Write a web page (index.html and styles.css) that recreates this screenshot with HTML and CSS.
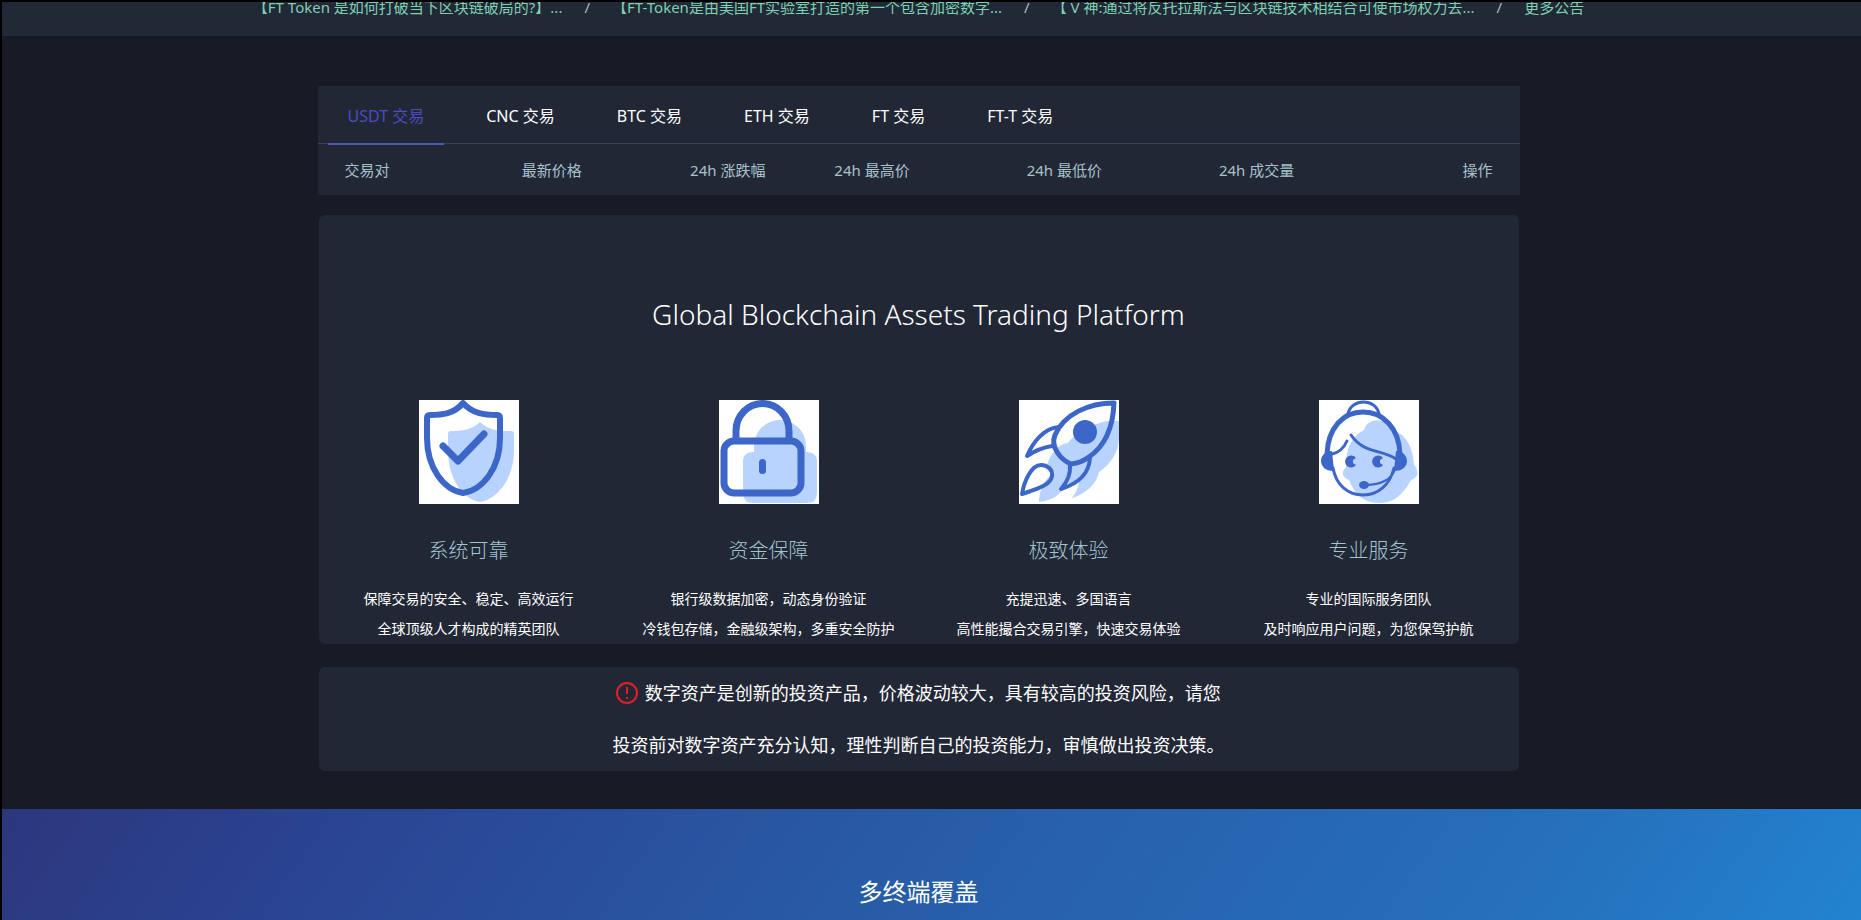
FILE: index.html
```html
<!DOCTYPE html>
<html lang="zh-CN">
<head>
    <meta charset="UTF-8">
    <meta name="viewport" content="width=device-width, initial-scale=1.0">
    <title>FT 交易平台</title>
    <link rel="stylesheet" href="styles.css">
</head>
<body>

    <div class="notice">
        <a href="#">【FT Token 是如何打破当下区块链破局的?】...</a>
        <span>/</span>
        <a href="#">【FT-Token是由美国FT实验室打造的第一个包含加密数字...</a>
        <span>/</span>
        <a href="#">【 V 神:通过将反托拉斯法与区块链技术相结合可使市场权力去...</a>
        <span>/</span>
        <a href="#">更多公告</a>
    </div>

    <main>
        <section class="card market">
            <div class="tabs">
                <button type="button" class="tab active">USDT 交易</button>
                <button type="button" class="tab">CNC 交易</button>
                <button type="button" class="tab">BTC 交易</button>
                <button type="button" class="tab">ETH 交易</button>
                <button type="button" class="tab">FT 交易</button>
                <button type="button" class="tab">FT-T 交易</button>
            </div>
            <table class="pairs">
                <thead>
                    <tr>
                        <th class="c-pair">交易对</th>
                        <th class="c-price">最新价格</th>
                        <th class="c-change">24h 涨跌幅</th>
                        <th class="c-day">24h 最高价</th>
                        <th class="c-day">24h 最低价</th>
                        <th class="c-day">24h 成交量</th>
                        <th class="c-action">操作</th>
                    </tr>
                </thead>
            </table>
        </section>

        <section class="card features">
            <h1>Global Blockchain Assets Trading Platform</h1>
            <div class="feature-list">
                <div class="feature">
                    <svg class="icon" viewBox="0 0 100 104">
                        <path class="shade" d="M61 22C69 30 80 31 92 31Q95 31 95 34V50C95 78 79 99 61 102C43 99 29 78 29 50V34Q29 31 32 31C43 31 53 30 61 22Z"/>
                        <path class="line" stroke-width="6" d="M44 3C54 14 66 15 78 15Q81 15 81 18V38C81 68 64 90 44 93C25 90 8 68 8 38V18Q8 15 11 15C23 15 35 14 44 3Z"/>
                        <path class="line" stroke-width="7" d="M24 46L39 61L65 34"/>
                    </svg>
                    <h2>系统可靠</h2>
                    <p>保障交易的安全、稳定、高效运行<br>全球顶级人才构成的精英团队</p>
                </div>
                <div class="feature">
                    <svg class="icon" viewBox="0 0 100 104">
                        <path class="shade" d="M35 52V46A26 26 0 0 1 87 46V52H88Q98 52 98 62V93Q98 103 88 103H34Q24 103 24 93V62Q24 52 34 52Z"/>
                        <path class="line" stroke-width="7" d="M17 40V31A26 27 0 0 1 70 31V40"/>
                        <rect class="line" stroke-width="7" x="5" y="41" width="77" height="52" rx="10"/>
                        <rect class="solid" x="40" y="59" width="7" height="15" rx="3.5"/>
                    </svg>
                    <h2>资金保障</h2>
                    <p>银行级数据加密，动态身份验证<br>冷钱包存储，金融级架构，多重安全防护</p>
                </div>
                <div class="feature">
                    <svg class="icon" viewBox="0 0 100 104">
                        <path class="shade" d="M100 21H88C66 26 54 36 49 43C38 44 31 55 28 65L36 73C26 76 20 92 20 102C32 101 44 94 46 84L60 82Q59 90 53 98C67 94 78 83 80 72C91 65 100 52 100 38Z"/>
                        <path class="line" stroke-width="5" d="M95 3C70 3 45 14 36 35C31 47 42 60 52 64Q62 63 70 57C86 46 94 28 95 3Z"/>
                        <path class="line" stroke-width="4" d="M40 27C25 28 14 42 8 56Q20 48 33 46"/>
                        <path class="line" stroke-width="4" d="M71 58C70 74 58 84 42 89Q52 78 51 65"/>
                        <path class="line" stroke-width="4" d="M3 94C5 82 12 65 22 65C29 65 34 70 33 76C32 86 14 90 3 94Z"/>
                        <circle class="solid" cx="66" cy="32" r="12"/>
                    </svg>
                    <h2>极致体验</h2>
                    <p>充提迅速、多国语言<br>高性能撮合交易引擎，快速交易体验</p>
                </div>
                <div class="feature">
                    <svg class="icon" viewBox="0 0 100 104">
                        <path class="shade" d="M45 30C48 17 70 17 75 30C88 36 94 48 95 65C100 70 100 78 92 80C84 95 74 103 61 103C46 103 36 96 30 80C23 78 22 72 27 67C27 48 32 37 45 30Z"/>
                        <path class="line" stroke-width="3" d="M29 14C32 -2 57 -2 60 14"/>
                        <path class="line" stroke-width="5" d="M8 54C9 28 24 12 44 12S80 28 81 54"/>
                        <path class="line" stroke-width="3" d="M14 68C17 85 29 95 44 95S71 85 75 68"/>
                        <path class="line" stroke-width="3" d="M32 35C45 54 62 49 77 59M28 41Q23 52 13 54"/>
                        <path class="solid" d="M13 51C6 51 2 56 2 61S6 71 15 71ZM77 51C84 51 88 56 88 61S84 71 75 71Z"/>
                        <path class="solid" d="M37 58A6 6 0 1 0 37 65L34 63V60ZM64 58A6 6 0 1 0 64 65L61 63V60Z"/>
                        <path class="line" stroke-width="2" d="M47 85C62 85 73 79 76 69"/>
                        <ellipse class="solid" cx="45" cy="85" rx="5" ry="4"/>
                    </svg>
                    <h2>专业服务</h2>
                    <p>专业的国际服务团队<br>及时响应用户问题，为您保驾护航</p>
                </div>
            </div>
        </section>

        <section class="card risk">
            <p>
                <svg class="warn" viewBox="0 0 22 22">
                    <circle cx="11" cy="11" r="10"/>
                    <path d="M11 5V12M11 15V17"/>
                </svg>
                数字资产是创新的投资产品，价格波动较大，具有较高的投资风险，请您<br>
                投资前对数字资产充分认知，理性判断自己的投资能力，审慎做出投资决策。
            </p>
        </section>
    </main>

    <section class="terminals">
        <h2>多终端覆盖</h2>
    </section>

</body>
</html>
```

FILE: styles.css
```css
* {
    box-sizing: border-box;
}

body {
    display: flex;
    flex-direction: column;
    min-height: 100vh;
    margin: 0;
    border-top: 2px solid #000;
    border-left: 2px solid #000;
    background-color: #181a26;
    color: #fff;
    font-family: "Noto Sans", "Noto Sans CJK SC", sans-serif;
}

h1, h2, p {
    margin: 0;
}

.notice {
    display: flex;
    justify-content: center;
    gap: 22px;
    height: 34px;
    padding-right: 26px;
    background-color: #212836;
    color: #a9bcc4;
    font-size: 15px;
    line-height: 10px;
    white-space: nowrap;
    overflow: hidden;
}

.notice a {
    color: #7fcfb4;
    text-decoration: none;
}

main {
    padding: 50px 26px 38px 0;
}

.card {
    max-width: 1200px;
    margin: 0 auto;
    background-color: #222736;
    border-radius: 6px;
}

.market {
    max-width: 1202px;
    border-radius: 0;
}

.tabs {
    display: flex;
    gap: 22px;
    height: 58px;
    padding: 0 10px;
    border-bottom: 1px solid #3a4152;
}

.tab {
    height: 59px;
    padding: 0 20px;
    border: 0;
    border-bottom: 2px solid transparent;
    background: none;
    color: #fff;
    font-family: inherit;
    font-size: 16px;
    cursor: pointer;
}

.tab.active {
    border-color: #4a5ab0;
    color: #4a4cc0;
}

.pairs {
    width: 100%;
    height: 51px;
    table-layout: fixed;
    border-collapse: collapse;
    color: #a6c2cb;
    font-size: 15px;
}

.pairs th {
    padding: 0;
    font-weight: normal;
    text-align: left;
}

.pairs .c-pair {
    width: 17%;
    padding-left: 27px;
}

.pairs .c-price {
    width: 14%;
}

.pairs .c-change {
    width: 12%;
}

.pairs .c-day {
    width: 16%;
}

.pairs .c-action {
    padding-right: 27px;
    text-align: right;
}

.features {
    margin-top: 20px;
    padding-top: 74px;
}

.features h1 {
    font-size: 28px;
    font-weight: 300;
    line-height: 50px;
    text-align: center;
}

.feature-list {
    display: grid;
    grid-template-columns: repeat(4, 1fr);
    margin-top: 61px;
    text-align: center;
}

.icon {
    display: block;
    width: 100px;
    height: 104px;
    margin: 0 auto;
    background-color: #fff;
}

.icon .shade {
    fill: #b9d3ff;
}

.icon .line {
    fill: none;
    stroke: #3c66c8;
    stroke-linecap: round;
    stroke-linejoin: round;
}

.icon .solid {
    fill: #3c66c8;
}

.feature h2 {
    margin: 32px 0 18px;
    color: #a2c6d0;
    font-size: 20px;
    font-weight: 300;
    line-height: 30px;
}

.feature p {
    font-size: 14px;
    line-height: 30px;
}

.risk {
    margin-top: 23px;
    font-size: 18px;
    line-height: 52px;
    text-align: center;
}

.warn {
    width: 22px;
    height: 22px;
    margin-right: 2px;
    vertical-align: -4px;
    fill: none;
    stroke: #e02028;
    stroke-width: 2;
}

.terminals {
    flex: 1;
    padding: 66px 26px 0 0;
    background: linear-gradient(125deg, #2c377c, #2a4493 18%, #285da8 50%, #2670bc 82%, #2283d0);
    text-align: center;
}

.terminals h2 {
    font-size: 24px;
    font-weight: normal;
    line-height: 34px;
}
```
